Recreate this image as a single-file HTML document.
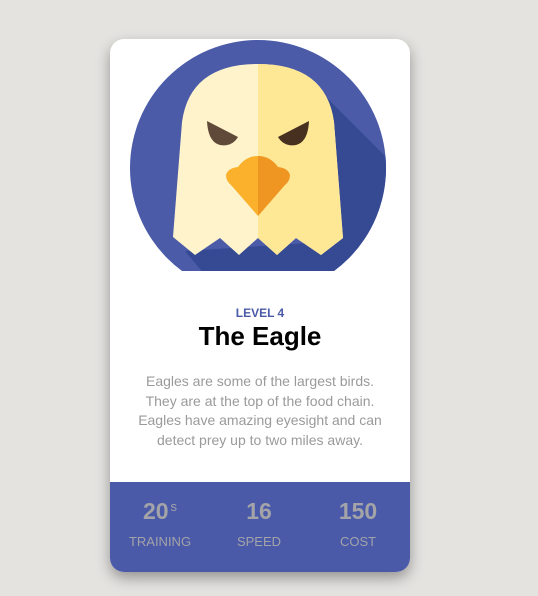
<!DOCTYPE html>
<html><head><style>
body{margin:0;width:538px;height:596px;background:#e5e3e0;font-family:"Liberation Sans",sans-serif;position:relative;overflow:hidden}
.card{position:absolute;left:110px;top:39px;width:300px;height:533px;background:#fff;border-radius:14px;overflow:hidden;box-shadow:0 6px 14px rgba(0,0,0,.35)}
.lv{position:absolute;top:267px;width:100%;text-align:center;color:#4a5aa8;font-weight:bold;font-size:12px}
h1{position:absolute;top:282px;margin:0;width:100%;text-align:center;font-size:26px;font-weight:bold;color:#000}
.d{position:absolute;top:333px;left:20px;width:260px;text-align:center;color:#9a9a9a;font-size:14px;line-height:19.6px}
.st{position:absolute;top:443px;left:0;width:300px;height:90px;background:#4a5aa8}
.c{position:absolute;top:16px;width:100px;text-align:center;color:#a3a3a8}
.n{font-size:23px;font-weight:bold;height:30px}
.n sup{font-size:13px;font-weight:normal;vertical-align:8px;margin-left:2px}
.l{font-size:13px;margin-top:6px}
</style></head><body>
<div class="card">
<svg width="300" height="232" viewBox="110 38 300 232" style="position:absolute;left:0;top:0">
<defs><clipPath id="cc"><circle cx="258" cy="167" r="128"/></clipPath></defs>
<circle cx="258" cy="167" r="128" fill="#4b5ba8"/>
<g clip-path="url(#cc)">
<polygon points="318,88 420,190 420,280 210,280 185,250 340,240" fill="#354a93"/>
</g>
<path d="M173,236 L182,121 Q190,63 258,63 Q326,63 334,121 L343,237 L321,254 L296,237 L277,254 L258,237 L239,254 L220,237 L195,254 Z" fill="#fff3cc"/>
<path d="M258,63 Q326,63 334,121 L343,237 L321,254 L296,237 L277,254 L258,237 Z" fill="#fee795"/>
<path d="M207,120 L238,136 Q232,146 220,144 Q208,141 207,120 Z" fill="#5f4a3a"/>
<path d="M309,120 L278,136 Q284,146 296,144 Q308,141 309,120 Z" fill="#47301f"/>
<path d="M258,155 Q246,155 238,166 Q228,167 226,174 Q226,180 231,184 L258,215 Z" fill="#fbb12b"/>
<path d="M258,155 Q270,155 278,166 Q288,167 290,174 Q290,180 285,184 L258,215 Z" fill="#ef9622"/>
</svg>
<div class="lv">LEVEL 4</div>
<h1>The Eagle</h1>
<div class="d">Eagles are some of the largest birds. They are at the top of the food chain. Eagles have amazing eyesight and can detect prey up to two miles away.</div>
<div class="st">
<div class="c" style="left:0"><div class="n">20<sup>s</sup></div><div class="l">TRAINING</div></div>
<div class="c" style="left:99px"><div class="n">16</div><div class="l">SPEED</div></div>
<div class="c" style="left:198px"><div class="n">150</div><div class="l">COST</div></div>
</div>
</div>
</body></html>
